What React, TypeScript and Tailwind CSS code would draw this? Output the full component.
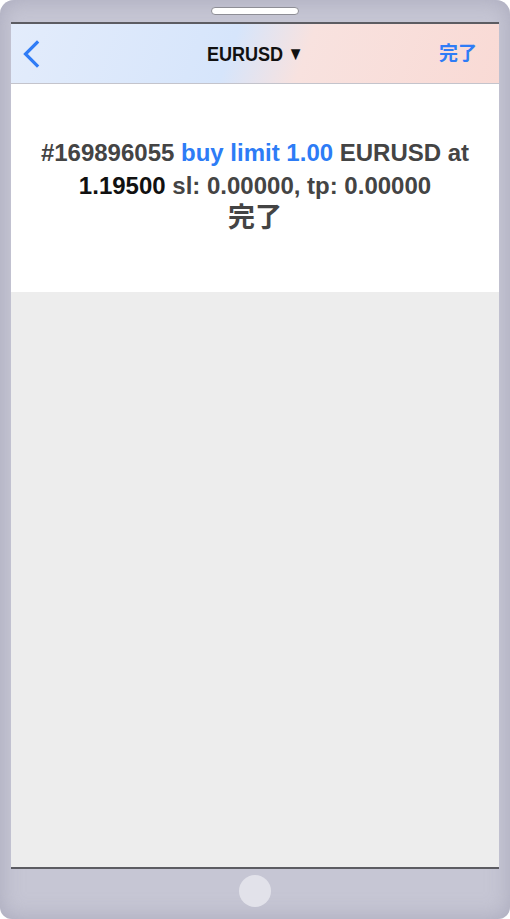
const font = { fontFamily: '"Liberation Sans", Arial, "Noto Sans CJK JP", sans-serif' }

function NavBar() {
  return (
    <header className="h-[60px] shrink-0 border-b border-[#c4c4cc] bg-[linear-gradient(110deg,#e3ecfb_0%,#d6e5fb_45%,#f8e2df_60%,#f9dad5_100%)] grid grid-cols-[1fr_auto_1fr] items-center">
      <div className="pl-[11px] flex items-center">
        <svg width="18" height="28" viewBox="0 0 18 28" fill="none">
          <path d="M15 2.5 L3.5 14 L15 25.5" stroke="#2f7cf6" strokeWidth="3.2" strokeLinecap="square" />
        </svg>
      </div>
      <div className="flex items-center gap-[5px] text-[21px] font-bold text-[#111] scale-x-[0.86]">
        EURUSD
        <span className="text-[19px] leading-none">▼</span>
      </div>
      <div className="text-right pr-[22px] pt-[2px] text-[19px] font-bold text-[#2f7cf6]">完了</div>
    </header>
  )
}

export default function App() {
  return (
    <div
      style={font}
      className="w-[510px] h-[919px] rounded-t-[14px] rounded-b-[12px] bg-[#c6c6d4] shadow-[inset_0_0_22px_rgba(150,150,172,0.6)] flex flex-col"
    >
      {/* Speaker */}
      <div className="h-[22px] shrink-0 flex justify-center pt-[7px]">
        <div className="w-[88px] h-[8px] rounded-full bg-white border border-[#8e8e96]" />
      </div>

      {/* Screen */}
      <div className="mx-[11px] h-[847px] border-t-2 border-b-2 border-[#5c5c62] flex flex-col bg-[#ededed]">
        <NavBar />
        <div className="h-[208px] shrink-0 bg-white pt-[52px] px-4 text-center text-[24px] font-bold leading-[33px] text-[#444]">
          <p>
            #169896055 <span className="text-[#2d7cf6]">buy limit 1.00</span> EURUSD at
          </p>
          <p>
            <span className="text-[#111]">1.19500</span> sl: 0.00000, tp: 0.00000
          </p>
          <p className="text-[27px] font-semibold">完了</p>
        </div>
        <div className="flex-1" />
      </div>

      {/* Home button */}
      <div className="flex-1 flex justify-center pt-[6px]">
        <div className="w-[32px] h-[32px] rounded-full bg-[#e2e2ea]" />
      </div>
    </div>
  )
}
